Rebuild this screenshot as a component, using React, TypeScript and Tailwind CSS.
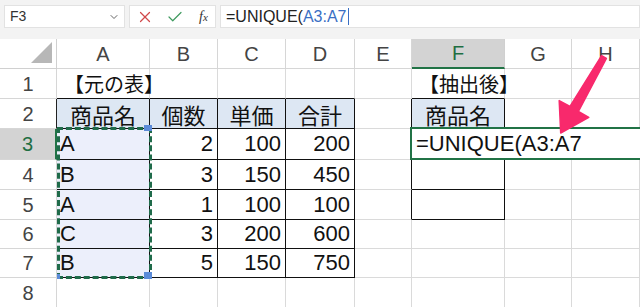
import React from 'react';
import { X, Check, ChevronDown } from 'lucide-react';

const cols = ['A', 'B', 'C', 'D', 'E', 'F', 'G', 'H'];
const rowHeights = ['h-[30px]', 'h-[30px]', 'h-[30px]', 'h-[31px]', 'h-[30px]', 'h-[30px]', 'h-[29px]', 'h-[29px]', 'h-[30px]'];

const jp = "font-['Noto_Sans_CJK_JP',sans-serif]";
const num = "font-['Liberation_Sans',Arial,sans-serif]";

type CellData = { text?: string; align?: 'left' | 'right' | 'center'; jp?: boolean };

const data: Record<number, CellData[]> = {
  1: [{ text: '【元の表】', align: 'left', jp: true }, {}, {}, {}, {}, { text: '【抽出後】', align: 'left', jp: true }, {}, {}],
  2: [
    { text: '商品名', align: 'center', jp: true },
    { text: '個数', align: 'center', jp: true },
    { text: '単価', align: 'center', jp: true },
    { text: '合計', align: 'center', jp: true },
    {},
    { text: '商品名', align: 'center', jp: true },
    {},
    {},
  ],
  3: [{ text: 'A', align: 'left' }, { text: '2', align: 'right' }, { text: '100', align: 'right' }, { text: '200', align: 'right' }, {}, {}, {}, {}],
  4: [{ text: 'B', align: 'left' }, { text: '3', align: 'right' }, { text: '150', align: 'right' }, { text: '450', align: 'right' }, {}, {}, {}, {}],
  5: [{ text: 'A', align: 'left' }, { text: '1', align: 'right' }, { text: '100', align: 'right' }, { text: '100', align: 'right' }, {}, {}, {}, {}],
  6: [{ text: 'C', align: 'left' }, { text: '3', align: 'right' }, { text: '200', align: 'right' }, { text: '600', align: 'right' }, {}, {}, {}, {}],
  7: [{ text: 'B', align: 'left' }, { text: '5', align: 'right' }, { text: '150', align: 'right' }, { text: '750', align: 'right' }, {}, {}, {}, {}],
  8: [{}, {}, {}, {}, {}, {}, {}, {}],
};

function cellClasses(r: number, c: number) {
  const inTable = r >= 2 && r <= 7 && c <= 3;
  const rightBlack = inTable || (r >= 2 && r <= 5 && (c === 4 || c === 5));
  const bottomBlack = (r >= 1 && r <= 7 && c <= 3) || (r >= 1 && r <= 5 && c === 5);
  let bg = 'bg-white';
  if (r === 2 && (c <= 3 || c === 5)) bg = 'bg-[#dde7f3]';
  else if (r >= 3 && r <= 7 && c === 0) bg = 'bg-[#eceffb]';
  return [
    'border-r border-b flex items-center overflow-visible whitespace-nowrap',
    rightBlack ? 'border-r-[#111]' : 'border-r-[#dadada]',
    bottomBlack ? 'border-b-[#111]' : 'border-b-[#dadada]',
    bg,
  ].join(' ');
}

function Toolbar() {
  return (
    <div className="h-[39px] bg-[#f3f3f3] flex items-start pt-[5px] pl-[4px] gap-[4px]">
      <div className="w-[121px] h-[23px] bg-white border border-[#e2e2e2] flex items-center justify-between pl-[5px] pr-[4px]">
        <span className={`${num} text-[14px] text-[#333]`}>F3</span>
        <ChevronDown size={12} strokeWidth={2} className="text-[#666]" />
      </div>
      <div className="w-[87px] h-[23px] bg-white border border-[#e2e2e2] flex items-center pl-[6px] gap-[12px]">
        <X size={18} strokeWidth={1.6} className="text-[#d1494b]" />
        <Check size={18} strokeWidth={1.6} className="text-[#3f9a5f]" />
        <span className="font-['Liberation_Serif',serif] italic text-[14px] text-[#333] ml-[3px]">
          f<span className="text-[11px]">x</span>
        </span>
      </div>
      <div className="flex-1 h-[23px] bg-white border border-[#e2e2e2] flex items-center pl-[5px]">
        <span className={`${num} text-[16px] text-[#222]`}>=UNIQUE(</span>
        <span className={`${num} text-[16px] text-[#3a6fc4]`}>A3:A7</span>
        <span className="w-px h-[17px] bg-[#3a6fc4] ml-[1px]" />
      </div>
    </div>
  );
}

export default function App() {
  return (
    <div className="w-[640px] h-[307px] overflow-hidden bg-white relative select-none">
      <Toolbar />
      <div className="grid grid-cols-[57px_93px_68px_68px_69px_57px_93px_67px_68px]">
        {/* corner */}
        <div className={`${rowHeights[0]} border-r border-b border-[#d0d0d0] relative bg-white`}>
          <svg className="absolute right-[4px] bottom-[5px]" width="21" height="21" viewBox="0 0 21 21">
            <polygon points="21,0 21,21 0,21" fill="#b7b7b7" />
          </svg>
        </div>
        {cols.map((c) => (
          <div
            key={c}
            className={`${rowHeights[0]} flex items-center justify-center ${num} text-[20px] ${
              c === 'F'
                ? 'bg-[#d3d3d3] text-[#1e6e42] border-r border-r-[#d0d0d0] border-b-2 border-b-[#217346]'
                : 'bg-white text-[#444] border-r border-b border-[#d6d6d6]'
            }`}
          >
            {c}
          </div>
        ))}

        {[1, 2, 3, 4, 5, 6, 7, 8].map((r) => (
          <React.Fragment key={r}>
            <div
              className={`${rowHeights[r]} flex items-center justify-center ${num} text-[20px] border-b border-b-[#d6d6d6] ${
                r === 3
                  ? 'bg-[#d3d3d3] text-[#1e6e42] border-r-2 border-r-[#217346]'
                  : r === 2
                  ? 'bg-white text-[#444] border-r border-r-[#222]'
                  : 'bg-white text-[#444] border-r border-r-[#d6d6d6]'
              }`}
            >
              {r}
            </div>
            {data[r].map((cell, ci) => (
              <div
                key={ci}
                className={`${rowHeights[r]} ${cellClasses(r, ci)} ${
                  cell.align === 'right'
                    ? 'justify-end pr-[4px]'
                    : cell.align === 'center'
                    ? 'justify-center'
                    : cell.jp
                    ? 'justify-start pl-[7px]'
                    : 'justify-start pl-[3px]'
                }`}
              >
                {cell.text && (
                  <span
                    className={`relative z-10 ${cell.jp ? jp : num} leading-none text-[#111] ${
                      cell.jp && cell.align === 'left' ? 'text-[20px]' : 'text-[22px]'
                    }`}
                  >
                    {cell.text}
                  </span>
                )}
              </div>
            ))}
          </React.Fragment>
        ))}
      </div>

      {/* copy range marching ants around A3:A7 */}
      <div className="absolute left-[57px] top-[127px] w-[95px] h-[152px] border-[3px] border-dashed border-[#1f6b4a] pointer-events-none z-20" />
      <div className="absolute left-[144px] top-[125px] w-[8px] h-[6px] bg-[#5b8bd8] z-20" />
      <div className="absolute left-[144px] top-[272px] w-[8px] h-[7px] bg-[#5b8bd8] z-20" />
      <div className="absolute left-[57px] top-[274px] w-[3px] h-[5px] bg-[#5b8bd8] z-20" />

      {/* editing cell F3 */}
      <div className="absolute left-[410px] top-[127px] w-[240px] h-[33px] border-2 border-[#217346] bg-white flex items-center pl-[4px] z-20">
        <span className={`${num} text-[22px] leading-none text-[#111]`}>=UNIQUE(A3:A7</span>
      </div>

      {/* pink arrow */}
      <svg className="absolute left-0 top-0 pointer-events-none z-30" width="640" height="307" viewBox="0 0 640 307">
        <polygon
          points="606.4,58.4 601.6,55.6 570,106.5 559.2,100.6 560.7,133 588.8,117.4 578.4,111.5"
          fill="#f8296c"
          stroke="#f8296c"
          strokeWidth="1.5"
          strokeLinejoin="round"
        />
      </svg>
    </div>
  );
}
